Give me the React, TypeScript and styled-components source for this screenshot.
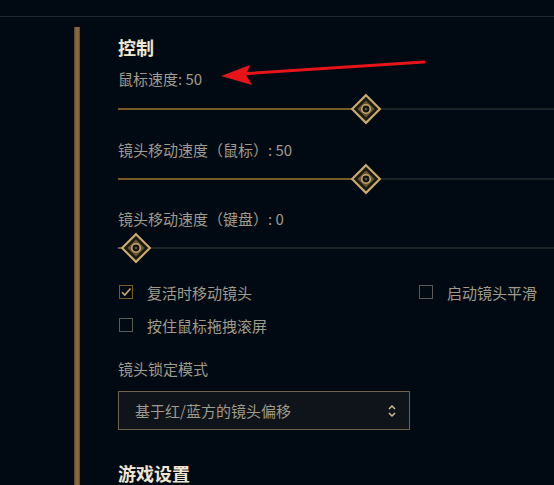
import styled, { createGlobalStyle } from "styled-components";

const GlobalStyle = createGlobalStyle`
  html, body {
    margin: 0;
    padding: 0;
    background: #010a13;
    overflow: hidden;
  }
  body {
    font-family: "Noto Sans CJK SC", "Noto Sans", sans-serif;
    width: 554px;
    height: 485px;
  }
`;

const Page = styled.div`
  position: relative;
  width: 554px;
  height: 485px;
  overflow: hidden;
`;

const TopRule = styled.div`
  margin-top: 16px;
  height: 1px;
  background: #20262d;
`;

const Main = styled.div`
  display: flex;
  padding-left: 74px;
  height: 468px;
`;

const GoldBar = styled.div`
  width: 6px;
  margin-top: 10px;
  flex-shrink: 0;
  background: linear-gradient(90deg, #5e4526 0%, #8a6a3e 40%, #8a6a3e 70%, #5e4526 100%);
`;

const Content = styled.div`
  display: flex;
  flex-direction: column;
  padding: 18px 0 0 38px;
  flex: 1;
`;

const Heading = styled.div<{ $mt?: number }>`
  font-size: 18px;
  font-weight: 700;
  line-height: 24px;
  color: #f0e6d2;
  margin-top: ${(p) => p.$mt ?? 0}px;
`;

const Label = styled.div<{ $mt: number }>`
  font-size: 15px;
  line-height: 20px;
  color: #a09b8c;
  margin-top: ${(p) => p.$mt}px;
  white-space: nowrap;
`;

const SliderWrap = styled.div<{ $mt: number }>`
  position: relative;
  width: 496px;
  height: 30px;
  margin-top: ${(p) => p.$mt}px;
  flex-shrink: 0;
`;

const Track = styled.div`
  position: absolute;
  left: 0;
  right: 0;
  top: 14px;
  height: 2px;
  background: #1e2328;
`;

const Fill = styled.div`
  position: absolute;
  left: 0;
  top: 14px;
  height: 2px;
  background: #785a28;
`;

const Thumb = styled.svg`
  position: absolute;
  top: -1px;
  width: 32px;
  height: 32px;
`;

const CheckGrid = styled.div`
  display: grid;
  grid-template-columns: 300px auto;
  row-gap: 13px;
  margin-top: 19px;
`;

const CheckRow = styled.label`
  display: flex;
  align-items: center;
  gap: 14px;
  height: 20px;
  font-size: 15px;
  color: #a09b8c;
  white-space: nowrap;
`;

const Box = styled.span<{ $on?: boolean }>`
  width: 12px;
  height: 12px;
  margin-left: 1px;
  border: 1px solid ${(p) => (p.$on ? "#785a28" : "#5b5a56")};
  display: flex;
  align-items: center;
  justify-content: center;
  flex-shrink: 0;
`;

const Select = styled.div`
  display: flex;
  align-items: center;
  justify-content: space-between;
  width: 292px;
  height: 40px;
  box-sizing: border-box;
  margin-top: 12px;
  padding: 0 12px 0 16px;
  border: 1px solid #6f634c;
  background: #0e1419;
  font-size: 15px;
  color: #a09b8c;
`;

const Arrow = styled.svg`
  position: absolute;
  left: 0;
  top: 0;
  pointer-events: none;
`;

const SLIDER_W = 496;
const THUMB = 36;

const Slider = ({ value, mt }: { value: number; mt: number }) => {
  const center = THUMB / 2 + ((SLIDER_W - THUMB) * value) / 100;
  return (
    <SliderWrap $mt={mt}>
      <Track />
      <Fill style={{ width: center }} />
      <Thumb viewBox="0 0 30 30" style={{ left: center - 16 }}>
        <polygon points="15,2 28,15 15,28 2,15" fill="#1b1a12" stroke="#c8aa6e" strokeWidth="2" />
        <polygon points="15,7 23,15 15,23 7,15" fill="#6a5530" />
        <circle cx="15" cy="15" r="4" fill="#141510" stroke="#c8aa6e" strokeWidth="1.5" />
        <circle cx="15" cy="15" r="1.2" fill="#5b5a56" />
      </Thumb>
    </SliderWrap>
  );
};

const Check = ({ on, text }: { on?: boolean; text: string }) => (
  <CheckRow>
    <Box $on={on}>
      {on && (
        <svg width="12" height="12" viewBox="0 0 12 12">
          <path d="M2 6.2 L4.8 9 L10.5 2.5" fill="none" stroke="#c8aa6e" strokeWidth="1.6" />
        </svg>
      )}
    </Box>
    {text}
  </CheckRow>
);

export default function App() {
  return (
    <Page>
      <GlobalStyle />
      <TopRule />
      <Main>
        <GoldBar />
        <Content>
          <Heading>控制</Heading>
          <Label $mt={10}>鼠标速度: 50</Label>
          <Slider value={50} mt={5} />
          <Label $mt={16}>镜头移动速度（鼠标）: 50</Label>
          <Slider value={50} mt={4} />
          <Label $mt={15}>镜头移动速度（键盘）: 0</Label>
          <Slider value={0} mt={4} />
          <CheckGrid>
            <Check on text="复活时移动镜头" />
            <Check text="启动镜头平滑" />
            <Check text="按住鼠标拖拽滚屏" />
          </CheckGrid>
          <Label $mt={24}>镜头锁定模式</Label>
          <Select>
            基于红/蓝方的镜头偏移
            <svg width="10" height="16" viewBox="0 0 10 16">
              <path d="M2 6 L5 3 L8 6" fill="none" stroke="#cdbe91" strokeWidth="1.5" />
              <path d="M2 10 L5 13 L8 10" fill="none" stroke="#cdbe91" strokeWidth="1.5" />
            </svg>
          </Select>
          <Heading $mt={31}>游戏设置</Heading>
        </Content>
      </Main>
      <Arrow width="554" height="485" viewBox="0 0 554 485">
        <line x1="424" y1="62" x2="240" y2="74" stroke="#e8141a" strokeWidth="3" strokeLinecap="round" />
        <polygon points="221,76 250,65 246,75 252,85" fill="#e8141a" />
      </Arrow>
    </Page>
  );
}
